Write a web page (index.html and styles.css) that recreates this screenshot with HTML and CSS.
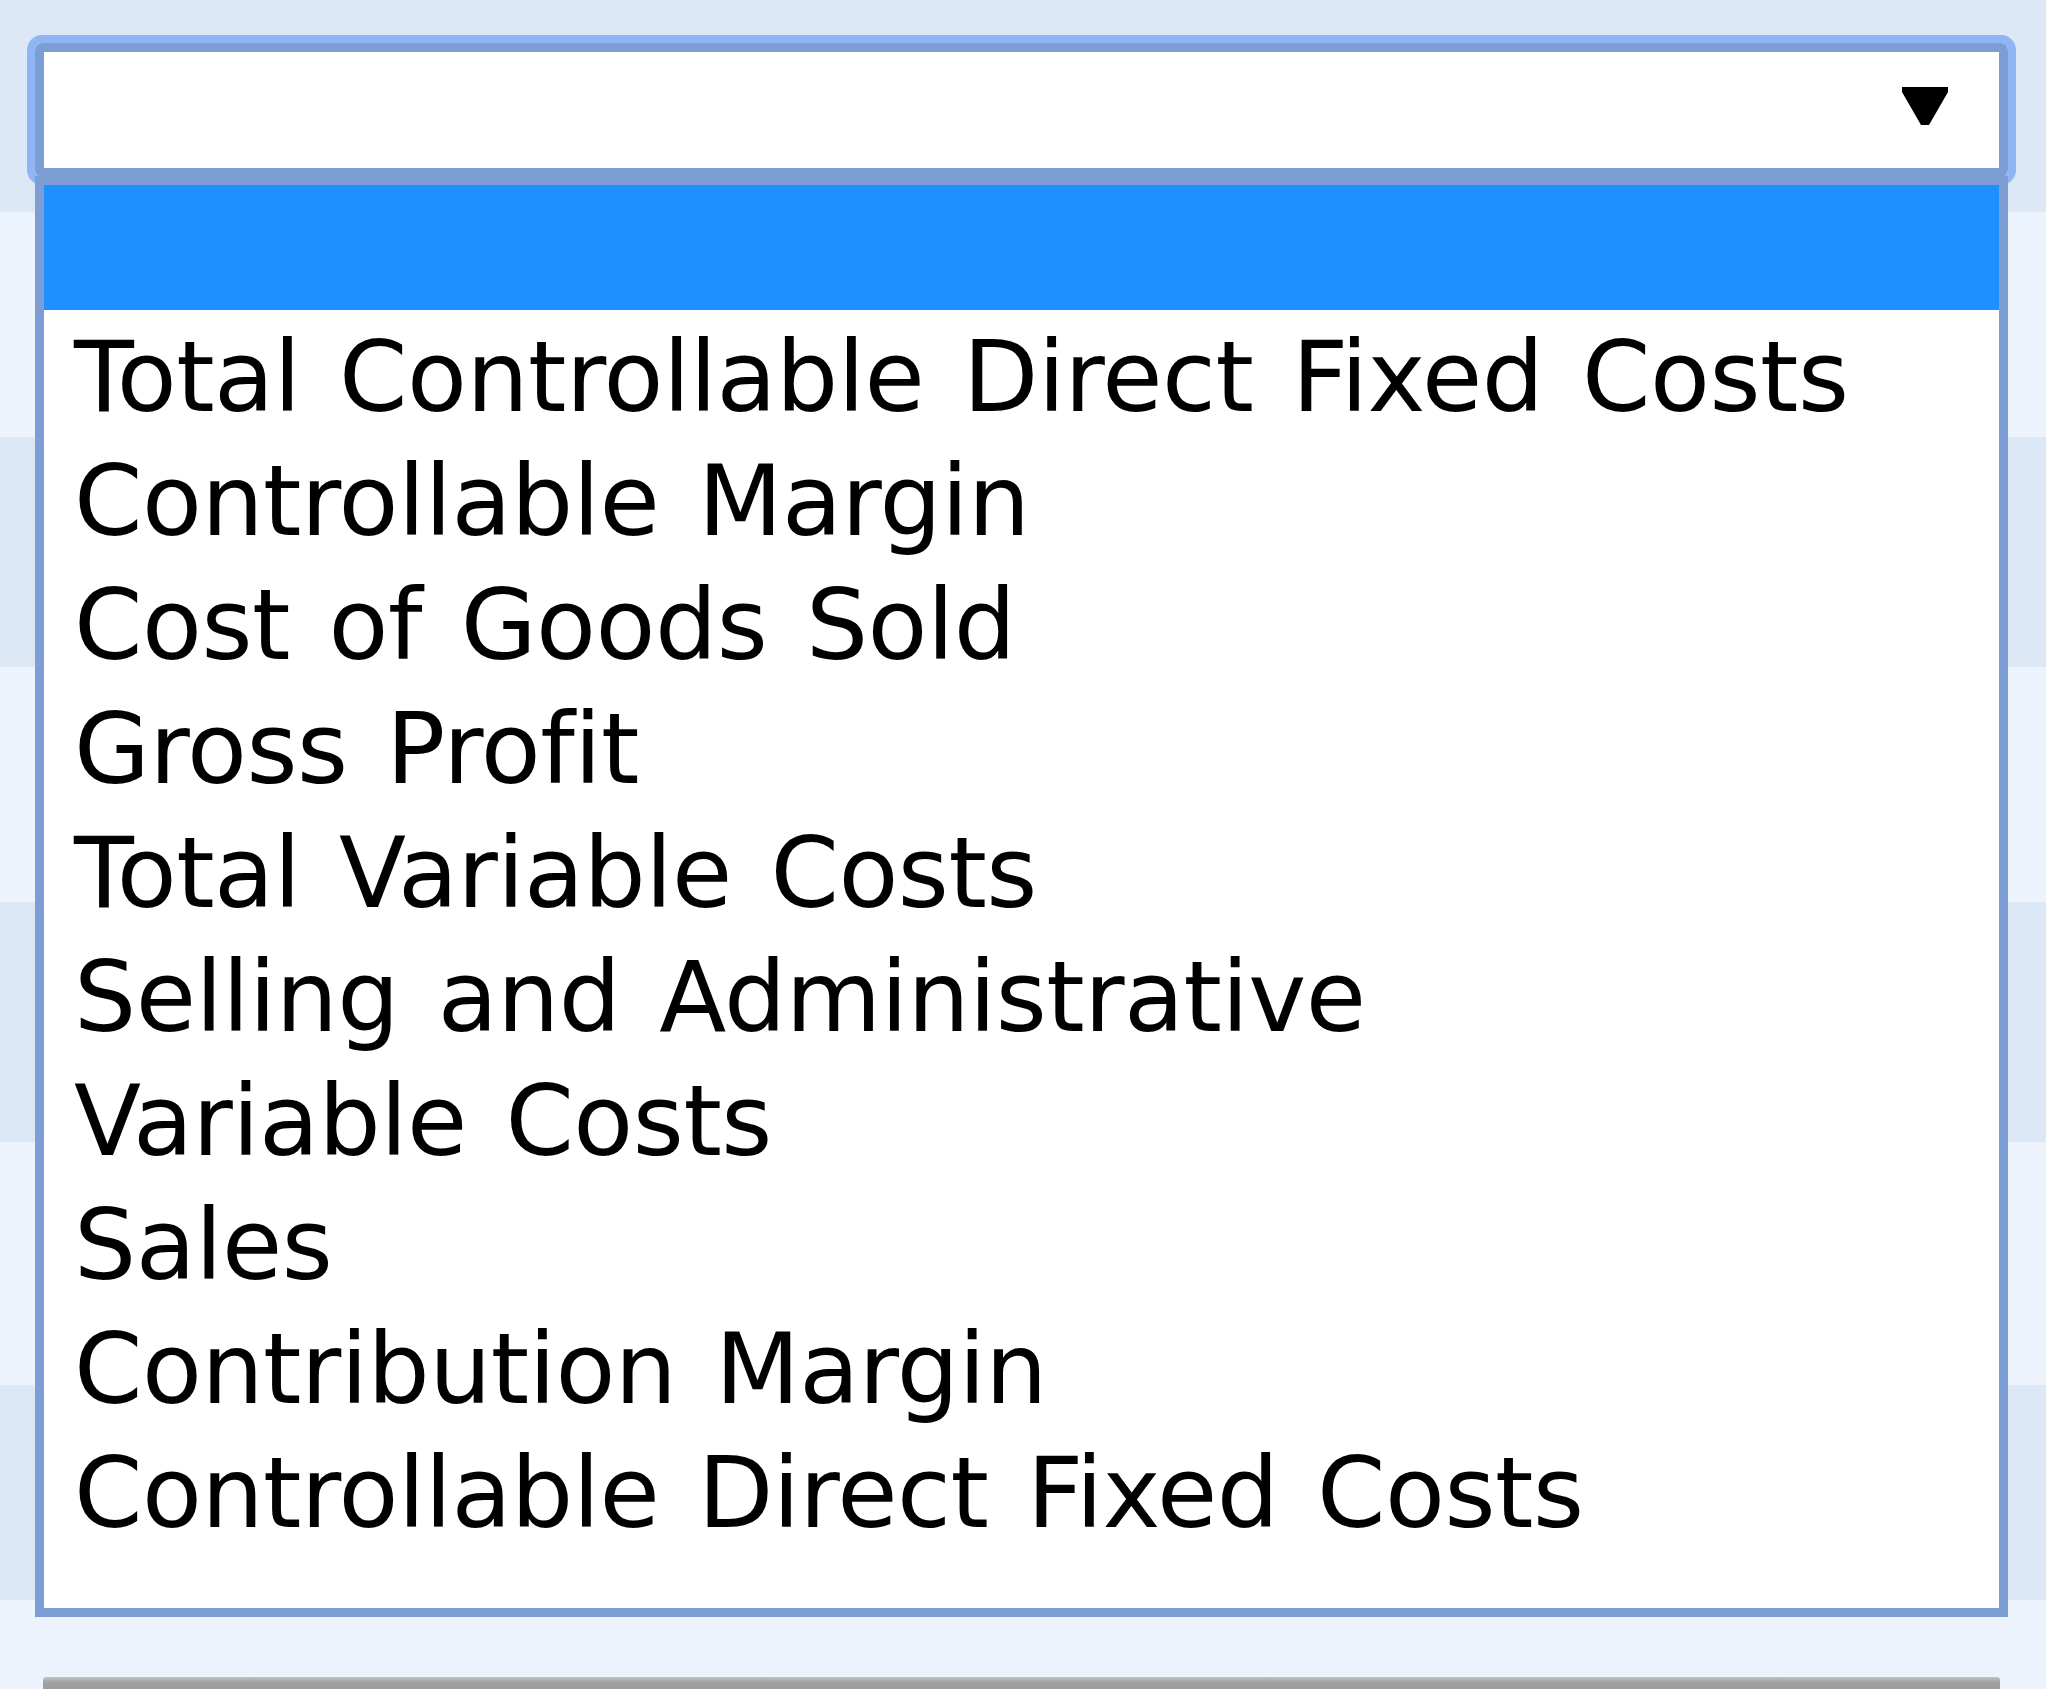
FILE: index.html
```html
<!DOCTYPE html>
<html lang="en">
<head>
<meta charset="utf-8">
<title>Dropdown</title>
<link rel="stylesheet" href="styles.css">
</head>
<body>
<div class="page">
  <div class="band dark b1"></div>
  <div class="band light b2"></div>
  <div class="band dark b3"></div>
  <div class="band light b4"></div>
  <div class="band dark b5"></div>
  <div class="band light b6"></div>
  <div class="band dark b7"></div>
  <div class="band light b8"><div class="next-control"></div></div>

  <div class="dropdown">
    <div class="select">
      <svg class="arrow" width="46" height="40" viewBox="0 0 46 40"><path d="M0 1 L46 1 L46 6 L27 39 L19 39 L0 6 Z" fill="#000"/></svg>
    </div>
    <ul class="list">
      <li class="item selected"></li>
      <li class="item">Total Controllable Direct Fixed Costs</li>
      <li class="item">Controllable Margin</li>
      <li class="item">Cost of Goods Sold</li>
      <li class="item">Gross Profit</li>
      <li class="item">Total Variable Costs</li>
      <li class="item">Selling and Administrative</li>
      <li class="item">Variable Costs</li>
      <li class="item">Sales</li>
      <li class="item">Contribution Margin</li>
      <li class="item">Controllable Direct Fixed Costs</li>
    </ul>
  </div>
</div>
</body>
</html>
```
FILE: styles.css
```css
html, body {
  margin: 0;
  padding: 0;
}
body {
  width: 2046px;
  height: 1689px;
  overflow: hidden;
  background: #ecf3fd;
  font-family: "DejaVu Sans", "Liberation Sans", sans-serif;
}
.page {
  position: relative;
  width: 2046px;
  height: 1689px;
  display: flex;
  flex-direction: column;
}
.band { width: 100%; flex: none; }
.dark { background: #dde8f7; }
.light { background: #edf3fd; }
.b1 { height: 212px; }
.b2 { height: 225px; }
.b3 { height: 230px; }
.b4 { height: 235px; }
.b5 { height: 240px; }
.b6 { height: 243px; }
.b7 { height: 215px; }
.b8 { height: 89px; }

.next-control {
  margin: 77px 0 0 43px;
  width: 1957px;
  height: 12px;
  background: linear-gradient(#c4c4c4, #a3a3a3 40%, #9c9c9c);
  border-radius: 3px 3px 0 0;
}

.dropdown {
  position: absolute;
  left: 35px;
  top: 43px;
  width: 1973px;
}
.select {
  box-sizing: border-box;
  height: 134px;
  background: #fff;
  border: 9px solid #7d9dd5;
  border-radius: 7px;
  outline: 8px solid #90b5f4;
  display: flex;
  justify-content: flex-end;
  align-items: center;
  padding-right: 51px;
}
.arrow {
  display: block;
  margin-top: -8px;
}
.list {
  position: relative;
  margin: 0;
  margin-top: -1px;
  padding: 0 0 58px 0;
  list-style: none;
  background: #fff;
  border: 9px solid #7d9ed4;
}
.item {
  box-sizing: border-box;
  height: 124px;
  padding: 10px 0 0 30px;
  line-height: 114px;
  font-size: 98px;
  letter-spacing: -0.5px;
  word-spacing: 8px;
  color: #000;
  white-space: nowrap;
}
.item.selected {
  height: 125px;
  background: #1e90ff;
}
```
